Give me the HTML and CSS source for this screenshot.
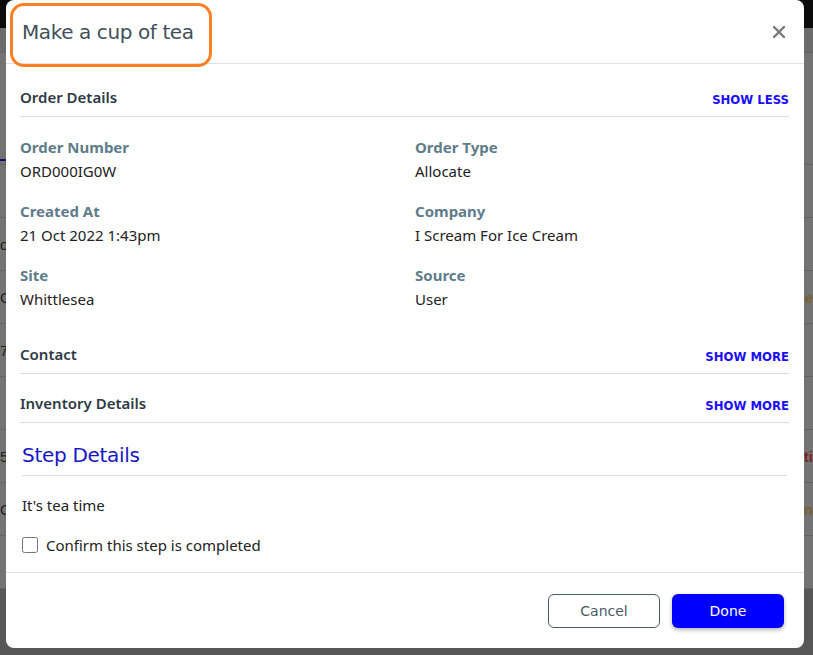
FILE: index.html
```html
<!DOCTYPE html>
<html lang="en">
<head>
    <meta charset="UTF-8">
    <meta name="viewport" content="width=device-width, initial-scale=1.0">
    <title>Make a cup of tea</title>
    <link rel="stylesheet" href="styles.css">
</head>
<body>
    <!-- Page behind the modal (dimmed) -->
    <div class="page">
        <div class="page-top"></div>
        <div class="page-bar"></div>
        <div class="page-tabs"><span class="tab-line"></span></div>
        <div class="page-row"></div>
        <div class="page-row"><span class="cell-l">o.</span></div>
        <div class="page-row"><span class="cell-l">G</span><span class="cell-r warn">e</span></div>
        <div class="page-row"><span class="cell-l">7</span></div>
        <div class="page-row"></div>
        <div class="page-row"><span class="cell-l">5(</span><span class="cell-r bad">ti</span></div>
        <div class="page-row"><span class="cell-l">GI</span><span class="cell-r warn">In</span></div>
        <div class="page-row"></div>
        <div class="page-foot"></div>
    </div>

    <!-- Modal -->
    <div class="modal">
        <span class="note-ring"></span>
        <div class="modal-header">
            <h2 class="modal-title">Make a cup of tea</h2>
            <span class="close">
                <svg width="12" height="12" viewBox="0 0 12 12"><path d="M1 1L11 11M11 1L1 11" stroke="#777" stroke-width="2.4" stroke-linecap="round"/></svg>
            </span>
        </div>

        <div class="modal-body">
            <div class="section-head first">
                <span class="section-title">Order Details</span>
                <a class="toggle">SHOW LESS</a>
            </div>

            <div class="fields">
                <div class="field">
                    <div class="field-label">Order Number</div>
                    <div class="field-value">ORD000IG0W</div>
                </div>
                <div class="field">
                    <div class="field-label">Order Type</div>
                    <div class="field-value">Allocate</div>
                </div>
                <div class="field">
                    <div class="field-label">Created At</div>
                    <div class="field-value">21 Oct 2022 1:43pm</div>
                </div>
                <div class="field">
                    <div class="field-label">Company</div>
                    <div class="field-value">I Scream For Ice Cream</div>
                </div>
                <div class="field">
                    <div class="field-label">Site</div>
                    <div class="field-value">Whittlesea</div>
                </div>
                <div class="field">
                    <div class="field-label">Source</div>
                    <div class="field-value">User</div>
                </div>
            </div>

            <div class="section-head">
                <span class="section-title">Contact</span>
                <a class="toggle">SHOW MORE</a>
            </div>

            <div class="section-head">
                <span class="section-title">Inventory Details</span>
                <a class="toggle">SHOW MORE</a>
            </div>

            <!-- Step -->
            <div class="step">
                <h3 class="step-title">Step Details</h3>
                <p class="step-text">It's tea time</p>
                <label class="confirm">
                    <input type="checkbox">
                    <span>Confirm this step is completed</span>
                </label>
            </div>
        </div>

        <div class="modal-footer">
            <button class="btn btn-cancel">Cancel</button>
            <button class="btn btn-done">Done</button>
        </div>
    </div>
</body>
</html>
```

FILE: styles.css
```css
body {
    margin: 0;
    padding: 0;
    background-color: #737373;
    font-family: 'Noto Sans', 'Open Sans', sans-serif;
    overflow: hidden;
}

/* Dimmed page */
.page {
    height: 655px;
    display: flex;
    flex-direction: column;
}

.page-top {
    height: 28px;
    background-color: #0b0b0b;
    flex-shrink: 0;
}

.page-bar {
    height: 24px;
    background-color: #6b6b6b;
    border-bottom: 1px solid #636363;
    flex-shrink: 0;
}

.page-tabs {
    height: 111px;
    border-bottom: 1px solid #636363;
    flex-shrink: 0;
    position: relative;
}

.tab-line {
    position: absolute;
    left: 0;
    top: 106px;
    width: 8px;
    height: 2px;
    background-color: #12126b;
}

.page-row {
    height: 52px;
    border-bottom: 1px solid #636363;
    flex-shrink: 0;
    display: flex;
    justify-content: space-between;
    align-items: center;
    font-family: 'Liberation Sans', sans-serif;
    font-size: 15px;
    color: #222;
}

.cell-r {
    font-weight: bold;
}

.warn {
    color: #7a6230;
}

.bad {
    color: #7a2626;
}

.page-foot {
    flex: 1;
    background-color: #575757;
}

/* Modal styles */
.modal {
    position: absolute;
    left: 6px;
    top: 0;
    width: 798px;
    height: 648px;
    background-color: #fff;
    border-radius: 8px;
    display: flex;
    flex-direction: column;
}

.note-ring {
    position: absolute;
    left: 4px;
    top: 3px;
    width: 196px;
    height: 58px;
    border: 3px solid #fd7f24;
    border-radius: 14px;
}

.modal-header {
    height: 63px;
    border-bottom: 1px solid #dee2e6;
    display: flex;
    align-items: center;
    justify-content: space-between;
    padding: 0 19px 0 16px;
    flex-shrink: 0;
}

.modal-title {
    margin: 0;
    font-family: 'DejaVu Sans', sans-serif;
    font-weight: normal;
    font-size: 20px;
    color: #3f505b;
    letter-spacing: -0.4px;
}

.close {
    display: flex;
    cursor: pointer;
}

.modal-body {
    flex: 1;
    padding: 0 15px 0 14px;
}

.section-head {
    display: flex;
    justify-content: space-between;
    align-items: flex-end;
    padding: 19px 0 9px;
    border-bottom: 1px solid #dcdcdc;
}

.section-head.first {
    padding-top: 23px;
}

.section-title {
    font-size: 15px;
    line-height: 20px;
    font-weight: 600;
    color: #2e3b45;
}

.toggle {
    font-family: 'DejaVu Sans', sans-serif;
    font-size: 11.7px;
    line-height: 14px;
    font-weight: bold;
    color: #1a0dff;
    cursor: pointer;
}

.fields {
    display: grid;
    grid-template-columns: 395px 1fr;
    row-gap: 20px;
    padding: 20px 0 16px;
}

.field-label {
    font-size: 15px;
    line-height: 20px;
    font-weight: bold;
    color: #5f7c8b;
}

.field-value {
    font-size: 15px;
    line-height: 20px;
    margin-top: 4px;
    color: #222;
}

/* Step styles */
.step {
    padding: 0 2px;
}

.step-title {
    margin: 19px 0 0;
    padding-bottom: 7px;
    border-bottom: 1px solid #dcdcdc;
    font-family: 'DejaVu Sans', sans-serif;
    font-weight: normal;
    font-size: 20px;
    line-height: 26px;
    color: #1616c8;
    letter-spacing: -0.3px;
}

.step-text {
    margin: 19px 0 0;
    font-size: 15px;
    line-height: 20px;
    color: #222;
}

.confirm {
    display: flex;
    align-items: center;
    gap: 8px;
    margin-top: 20px;
    font-size: 15px;
    line-height: 20px;
    color: #222;
}

.confirm input {
    margin: 0;
    width: 16px;
    height: 16px;
}

.modal-footer {
    height: 76px;
    border-top: 1px solid #dee2e6;
    display: flex;
    justify-content: flex-end;
    align-items: flex-start;
    gap: 12px;
    padding: 21px 20px 0;
    box-sizing: border-box;
    flex-shrink: 0;
}

.btn {
    width: 112px;
    height: 34px;
    border-radius: 6px;
    font-family: 'DejaVu Sans', sans-serif;
    font-size: 14px;
    cursor: pointer;
}

.btn-cancel {
    background-color: #fff;
    border: 1px solid #4b5b66;
    color: #4b5b66;
}

.btn-done {
    background-color: #0000ff;
    border: none;
    color: #fff;
    box-shadow: 0 2px 4px rgba(0, 0, 0, 0.3);
}
```
